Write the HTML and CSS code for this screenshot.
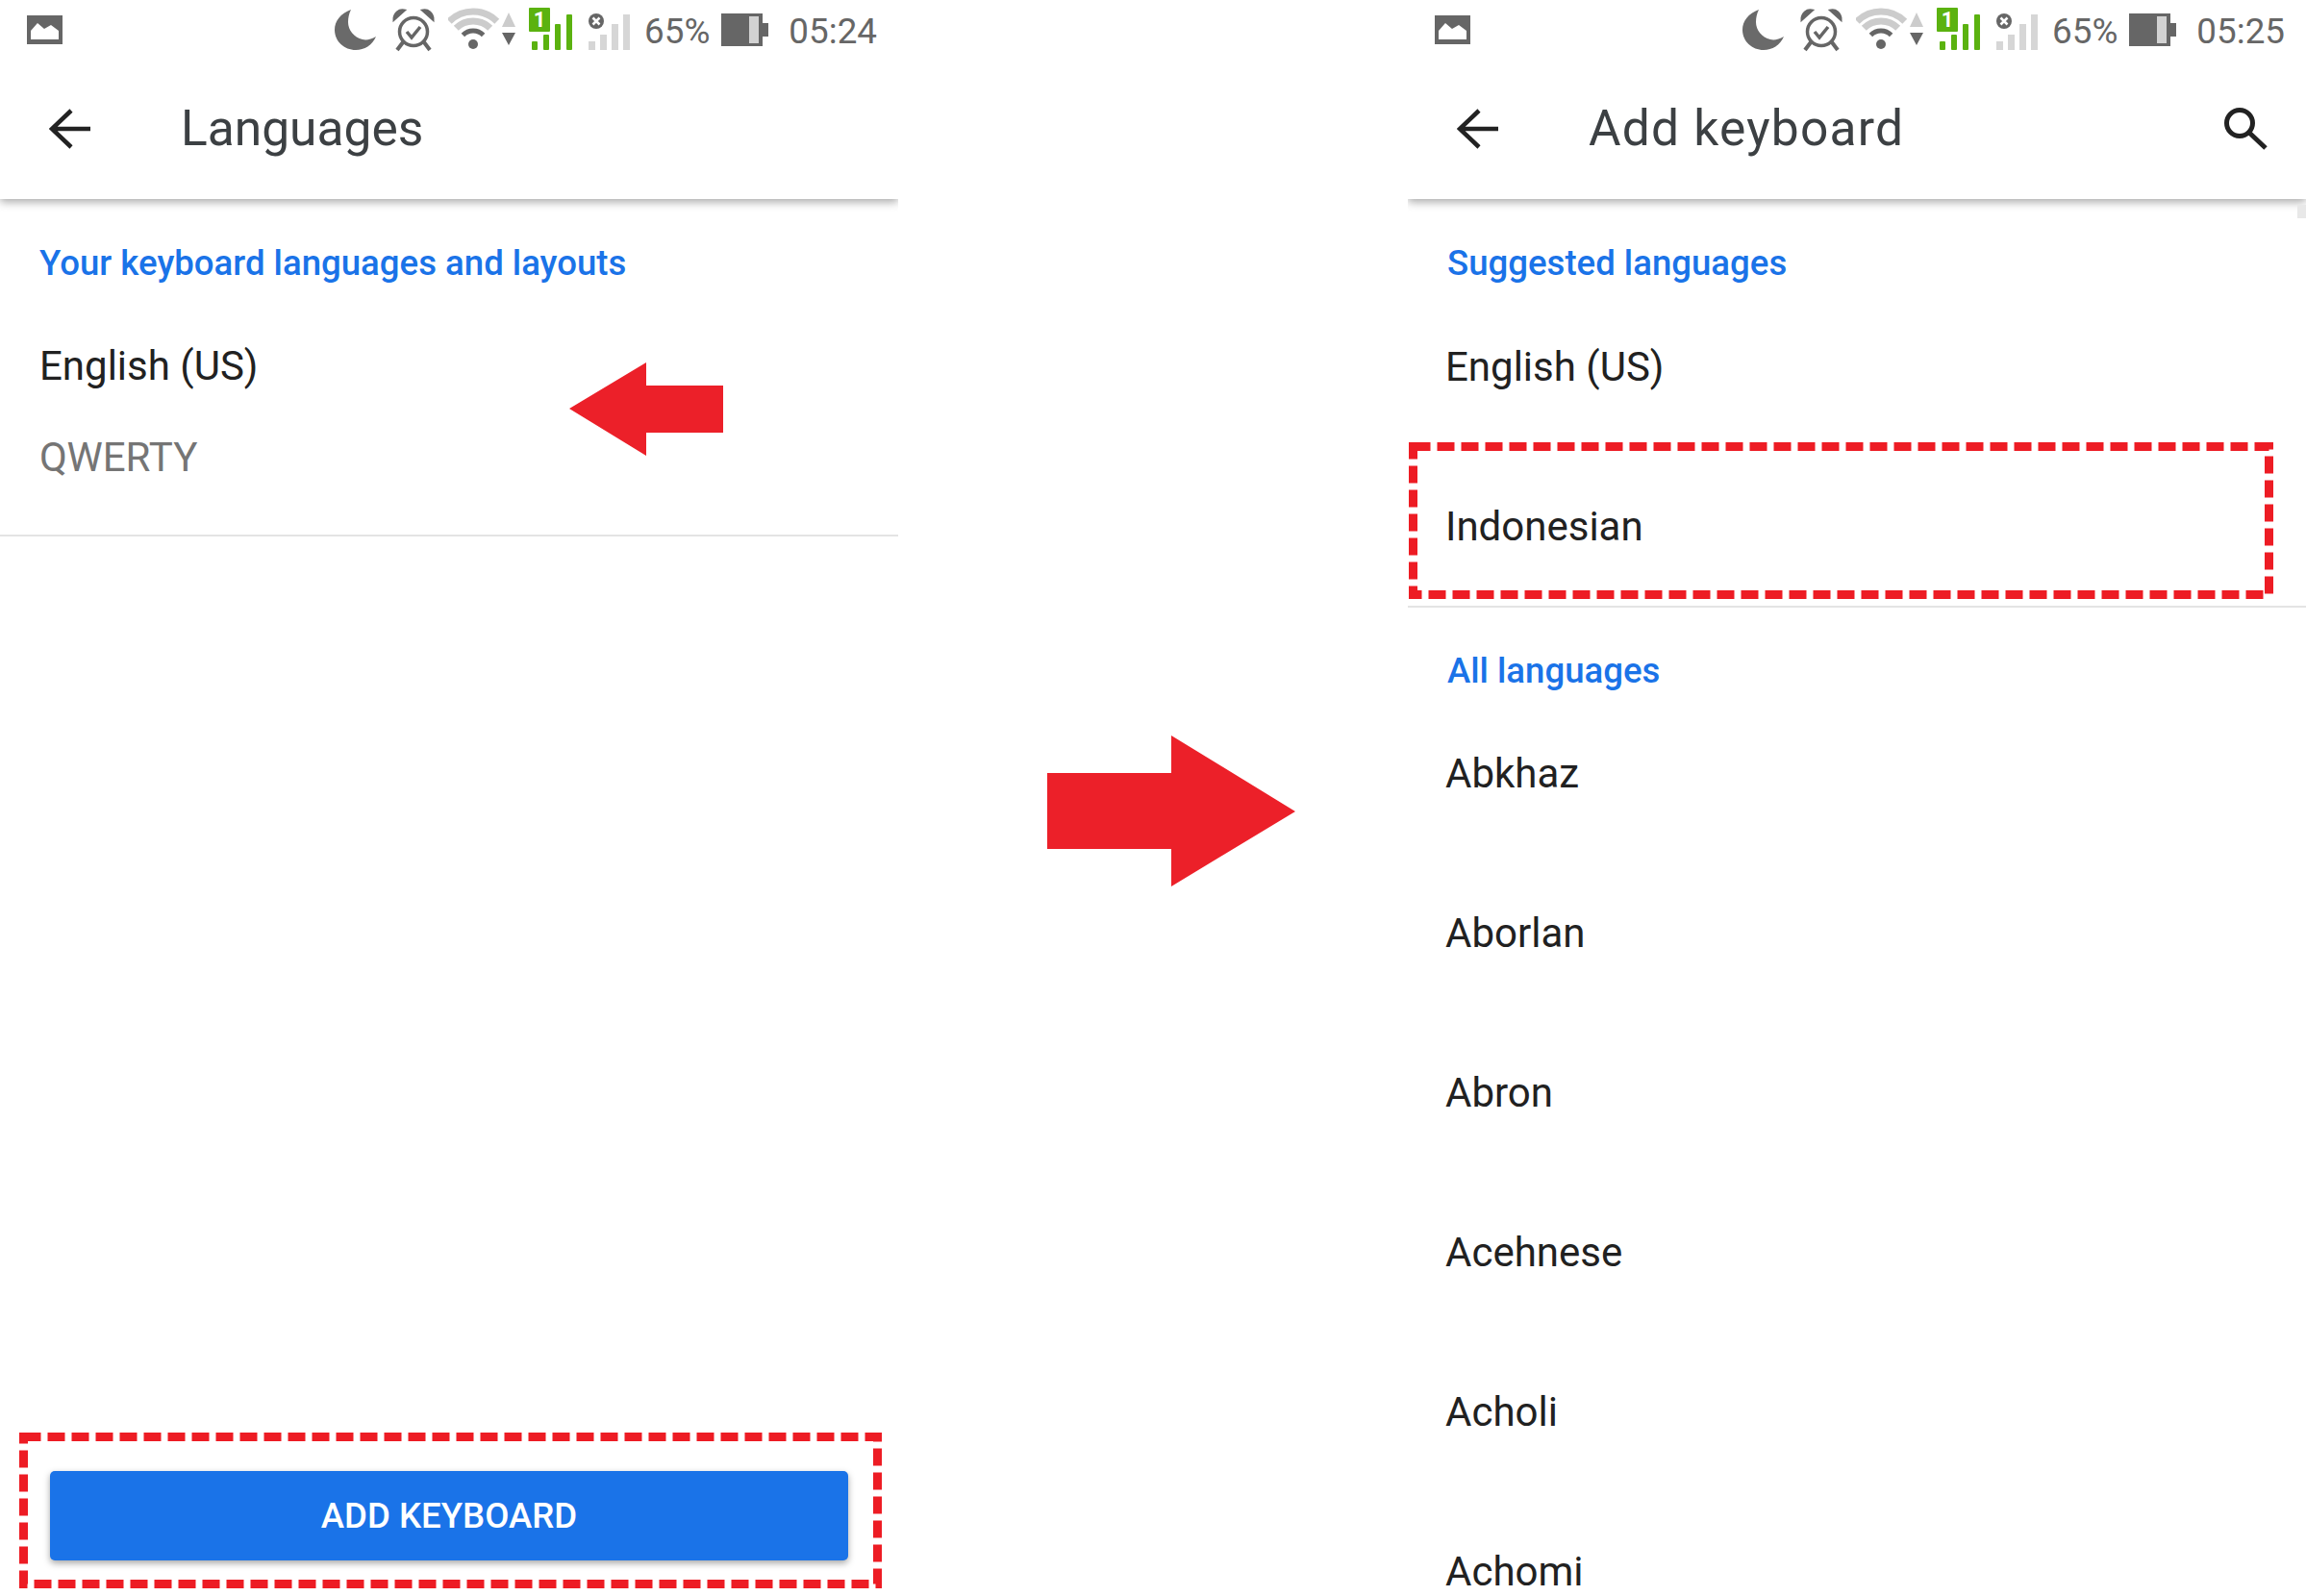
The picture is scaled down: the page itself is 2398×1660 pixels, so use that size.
FILE: index.html
```html
<!DOCTYPE html>
<html lang="en">
<head>
    <meta charset="UTF-8">
    <title>Add keyboard steps</title>
    <link rel="stylesheet" href="styles.css">
</head>
<body>
    <svg class="sprite" width="0" height="0">
        <symbol id="i-image" viewBox="0 0 37 60">
            <rect y="16" width="37" height="30" fill="#666"/>
            <path d="M4 41V32L11 24L18 30L25 26L33 32V41Z" fill="#fff"/>
        </symbol>
        <symbol id="i-moon" viewBox="0 0 46 60">
            <path d="M17 10C6 14 0 22 0 31C0 43 10 52 22 52C31 52 39 47 43 38C38 41 33 42 29 41C20 39 14 31 14 23C14 18 15 14 17 10Z" fill="#6a6a6a"/>
        </symbol>
        <symbol id="i-alarm" viewBox="0 0 44 60">
            <circle cx="22" cy="33" r="14.5" fill="none" stroke="#666" stroke-width="3.5"/>
            <path d="M15 33L20 39L29 28" fill="none" stroke="#666" stroke-width="3.5"/>
            <path d="M2 20C2 14 7 10 12 11ZM42 20C42 14 37 10 32 11Z" fill="#666" stroke="#666" stroke-width="3"/>
            <path d="M11 44L5 52M33 44L39 52" stroke="#666" stroke-width="4"/>
        </symbol>
        <symbol id="i-wifi" viewBox="0 0 70 60">
            <g fill="none" stroke-width="7">
                <path d="M1.25 22.25A35 35 0 0 1 50.75 22.25" stroke="#ccc"/>
                <path d="M8.3 29.3A25 25 0 0 1 43.7 29.3" stroke="#ccc"/>
                <path d="M15.4 36.4A15 15 0 0 1 36.6 36.4" stroke="#666" stroke-width="5"/>
            </g>
            <circle cx="26" cy="46" r="5" fill="#666"/>
            <path d="M63 13L70 28H56Z" fill="#ccc"/>
            <path d="M56 34H70L63 47Z" fill="#666"/>
        </symbol>
        <symbol id="i-bars" viewBox="0 0 46 60">
            <g fill="#5bb210">
                <rect x="3" y="43" width="6" height="9" rx="1"/>
                <rect x="15" y="36" width="6" height="16" rx="1"/>
                <rect x="27" y="25" width="6" height="27" rx="1"/>
                <rect x="39" y="15" width="6" height="37" rx="1"/>
            </g>
            <rect y="8" width="22" height="25" rx="1" fill="#5bb210"/>
        </symbol>
        <symbol id="i-sim2" viewBox="0 0 46 60">
            <g fill="#d6d6d6">
                <rect x="2" y="43" width="7" height="9"/>
                <rect x="14" y="36" width="7" height="16"/>
                <rect x="26" y="25" width="7" height="27"/>
                <rect x="38" y="15" width="7" height="37"/>
            </g>
            <circle cx="10" cy="22" r="8" fill="#666"/>
            <path d="M6.500 18.500L13.500 25.500M13.500 18.500L6.500 25.500" stroke="#fff" stroke-width="2.500"/>
        </symbol>
        <symbol id="i-battery" viewBox="0 0 56 60">
            <rect y="14" width="43" height="34" fill="#666"/>
            <rect x="29" y="17" width="10" height="28" fill="#d2d2d2"/>
            <rect x="43" y="24" width="6" height="14" fill="#666"/>
        </symbol>
    </svg>

    <div class="phone">
        <div class="status-bar">
            <svg class="ic-image"><use href="#i-image"/></svg>
            <div class="status-right">
                <svg class="ic-moon"><use href="#i-moon"/></svg>
                <svg class="ic-alarm"><use href="#i-alarm"/></svg>
                <svg class="ic-wifi"><use href="#i-wifi"/></svg>
                <svg class="ic-sim" viewBox="0 0 46 60"><use href="#i-bars"/><text x="11" y="28" class="sim-no">1</text></svg>
                <svg class="ic-sim"><use href="#i-sim2"/></svg>
                <span>65%</span>
                <svg class="ic-battery"><use href="#i-battery"/></svg>
                <span>05:24</span>
            </div>
        </div>
        <div class="toolbar">
            <svg class="back" viewBox="0 0 44 44"><path d="M43 22H5M23 3L3 22L23 41"/></svg>
            <h1>Languages</h1>
        </div>
        <h2 class="section-title">Your keyboard languages and layouts</h2>
        <div class="current-lang">
            <div class="lang-name">English (US)</div>
            <div class="lang-layout">QWERTY</div>
        </div>
        <div class="bottom-bar">
            <button class="add-btn">ADD KEYBOARD</button>
        </div>

        <svg class="arrow-left" viewBox="0 0 160 97"><path d="M0 48L80 0V24H160V73H80V97Z"/></svg>
        <svg class="dash-left" viewBox="0 0 897 162"><rect x="4.500" y="4.500" width="888" height="153"/></svg>
    </div>

    <div class="gutter">
        <svg class="arrow-right" viewBox="0 0 258 157"><path d="M0 39H129V0L258 79L129 157V118H0Z"/></svg>
    </div>

    <div class="phone">
        <div class="status-bar">
            <svg class="ic-image"><use href="#i-image"/></svg>
            <div class="status-right">
                <svg class="ic-moon"><use href="#i-moon"/></svg>
                <svg class="ic-alarm"><use href="#i-alarm"/></svg>
                <svg class="ic-wifi"><use href="#i-wifi"/></svg>
                <svg class="ic-sim" viewBox="0 0 46 60"><use href="#i-bars"/><text x="11" y="28" class="sim-no">1</text></svg>
                <svg class="ic-sim"><use href="#i-sim2"/></svg>
                <span>65%</span>
                <svg class="ic-battery"><use href="#i-battery"/></svg>
                <span>05:25</span>
            </div>
        </div>
        <div class="toolbar">
            <svg class="back" viewBox="0 0 44 44"><path d="M43 22H5M23 3L3 22L23 41"/></svg>
            <h1 class="title-wide">Add keyboard</h1>
            <svg class="search" viewBox="0 0 46 44"><circle cx="17" cy="16" r="13.500"/><path d="M27 26L44 42"/></svg>
        </div>
        <div class="scroll-stub"></div>
        <h2 class="section-title">Suggested languages</h2>
        <div class="lang-row">English (US)</div>
        <div class="lang-row">Indonesian</div>
        <div class="divider"></div>
        <h2 class="section-title all-title">All languages</h2>
        <div class="lang-row">Abkhaz</div>
        <div class="lang-row">Aborlan</div>
        <div class="lang-row">Abron</div>
        <div class="lang-row">Acehnese</div>
        <div class="lang-row">Acholi</div>
        <div class="lang-row">Achomi</div>

        <svg class="dash-right" viewBox="0 0 899 163"><rect x="4.500" y="4.500" width="890" height="154"/></svg>
    </div>
</body>
</html>
```

FILE: styles.css
```css
html, body {
    margin: 0;
    padding: 0;
    background: #fff;
}

body {
    display: flex;
    width: 2398px;
    height: 1660px;
    overflow: hidden;
    font-family: Roboto, "Liberation Sans", sans-serif;
}

.sprite {
    position: absolute;
}

.phone {
    position: relative;
    display: flex;
    flex-direction: column;
    flex: none;
    width: 934px;
    height: 1660px;
    overflow: hidden;
}

.gutter {
    flex: none;
    width: 530px;
    padding: 765px 0 0 155px;
    box-sizing: border-box;
}

.status-bar {
    display: flex;
    flex: none;
    justify-content: space-between;
    align-items: center;
    height: 60px;
    padding: 0 22px 0 28px;
    color: #666;
    font-size: 36.800px;
}

.status-right {
    display: flex;
    align-items: center;
    gap: 14px;
    height: 60px;
}

.status-right span {
    line-height: 60px;
    position: relative;
    top: 3px;
}

.status-bar svg {
    height: 60px;
    flex: none;
}

.ic-image { width: 37px; }
.ic-moon { width: 46px; }
.ic-alarm { width: 44px; }
.ic-wifi { width: 70px; }
.ic-sim { width: 46px; }
.ic-battery { width: 56px; margin-left: -2px; }

.sim-no {
    fill: #fff;
    font-size: 22px;
    font-weight: 700;
    text-anchor: middle;
}

.toolbar {
    display: flex;
    flex: none;
    align-items: center;
    height: 147px;
    padding: 0 40px 0 51px;
    box-shadow: 0 3px 9px rgba(0, 0, 0, 0.35);
    clip-path: inset(0 0 -20px 0);
}

.toolbar h1 {
    margin: 0 0 0 93px;
    flex: 1;
    color: #3c4043;
    font-size: 51.500px;
    font-weight: 400;
}

.toolbar .title-wide {
    letter-spacing: 1.200px;
}

.back {
    width: 44px;
    height: 44px;
    fill: none;
    stroke: #222;
    stroke-width: 4.5;
}

.search {
    width: 46px;
    height: 44px;
    fill: none;
    stroke: #222;
    stroke-width: 5;
}

.scroll-stub {
    position: absolute;
    top: 213px;
    right: 0;
    width: 9px;
    height: 14px;
    background: #e8e8e8;
}

.section-title {
    flex: none;
    margin: 0;
    padding: 45px 0 2px 41px;
    color: #1a73e8;
    font-size: 36.600px;
    font-weight: 500;
    line-height: 44px;
}

.all-title {
    padding: 44px 0 1px 41px;
}

.lang-row {
    display: flex;
    flex: none;
    align-items: center;
    height: 166px;
    padding-left: 39px;
    color: #212121;
    font-size: 42px;
}

.divider {
    flex: none;
    height: 2px;
    background: #e4e4e4;
}

.current-lang {
    flex: none;
    padding: 55px 0 52px 41px;
    border-bottom: 2px solid #e4e4e4;
    font-size: 42px;
    line-height: 56px;
}

.lang-name {
    color: #212121;
}

.lang-layout {
    margin-top: 39px;
    color: #757575;
}

.bottom-bar {
    margin-top: auto;
    padding: 0 52px 37px 52px;
}

.add-btn {
    display: block;
    width: 100%;
    height: 93px;
    padding: 0;
    border: none;
    border-radius: 5px;
    background: #1a73e8;
    box-shadow: 0 3px 7px rgba(0, 0, 0, 0.35);
    color: #fff;
    font-family: inherit;
    font-size: 36.600px;
    font-weight: 500;
}

/* red markers drawn on top of the screenshots */
.arrow-left, .arrow-right {
    fill: #ec2029;
}

.arrow-left {
    position: absolute;
    left: 592px;
    top: 377px;
    width: 160px;
    height: 97px;
}

.arrow-right {
    display: block;
    width: 258px;
    height: 157px;
}

.dash-left, .dash-right {
    position: absolute;
    fill: none;
    stroke: #ed1c24;
    stroke-width: 9;
    stroke-dasharray: 18 7;
}

.dash-left {
    left: 20px;
    top: 1490px;
    width: 897px;
    height: 162px;
}

.dash-right {
    left: 1px;
    top: 460px;
    width: 899px;
    height: 163px;
}
```
